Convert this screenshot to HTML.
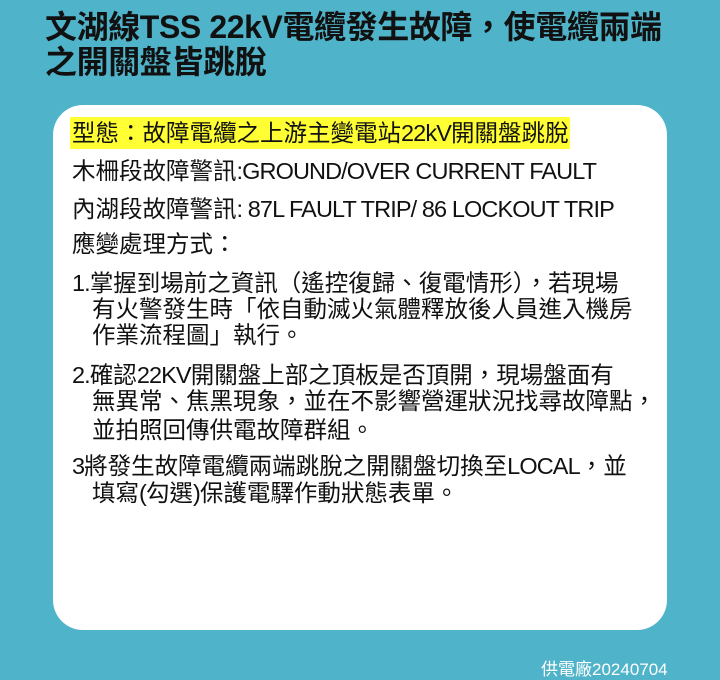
<!DOCTYPE html>
<html><head><meta charset="utf-8"><style>
html,body{margin:0;padding:0}
body{width:720px;height:680px;background:#4fb3c9;position:relative;overflow:hidden;font-family:"Liberation Sans","Noto Sans CJK TC",sans-serif;color:#111}
.title{position:absolute;left:45px;top:10px;font-size:32px;line-height:35px;font-weight:bold;letter-spacing:-0.4px;color:#111}
.card{position:absolute;left:53px;top:105px;width:614px;height:525px;background:#fff;border-radius:30px}
.l{position:absolute;left:72px;font-size:23.5px;line-height:26px;white-space:nowrap}
.n{letter-spacing:-0.9px}
.hl{background:#ffff33;padding:3px 2px;margin-left:-2px}
.foot{position:absolute;left:541px;top:655px;font-size:17px;color:#fff}
</style></head><body>
<div class="title">文湖線TSS 22kV電纜發生故障，使電纜兩端<br>之開關盤皆跳脫</div>
<div class="card"></div>
<div class="l" style="top:120px"><span class="hl">型態：故障電纜之上游主變電站<span class="n">22kV</span>開關盤跳脫</span></div>
<div class="l" style="top:158px">木柵段故障警訊<span class="n">:GROUND/OVER CURRENT FAULT</span></div>
<div class="l" style="top:196px">內湖段故障警訊<span class="n">: 87L FAULT TRIP/ 86 LOCKOUT TRIP</span></div>
<div class="l" style="top:231px">應變處理方式：</div>
<div class="l" style="top:270px"><span class="n">1.</span>掌握到場前之資訊（遙控復歸、復電情形），若現場</div>
<div class="l" style="top:296px;left:92px">有火警發生時「依自動滅火氣體釋放後人員進入機房</div>
<div class="l" style="top:322px;left:92px">作業流程圖」執行。</div>
<div class="l" style="top:362px"><span class="n">2.</span>確認<span class="n">22KV</span>開關盤上部之頂板是否頂開，現場盤面有</div>
<div class="l" style="top:388px;left:92px">無異常、焦黑現象，並在不影響營運狀況找尋故障點，</div>
<div class="l" style="top:417px;left:92px">並拍照回傳供電故障群組。</div>
<div class="l" style="top:453px"><span class="n">3</span>將發生故障電纜兩端跳脫之開關盤切換至<span class="n">LOCAL</span>，並</div>
<div class="l" style="top:480px;left:92px">填寫<span class="n">(</span>勾選<span class="n">)</span>保護電驛作動狀態表單。</div>
<div class="foot">供電廠20240704</div>
</body></html>
